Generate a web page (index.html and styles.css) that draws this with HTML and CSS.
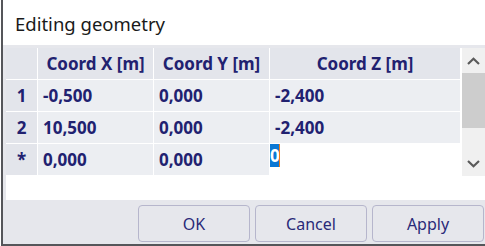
FILE: index.html
```html
<html>
	<head>
		<title>Editing geometry</title>
		<link rel="stylesheet" href="styles.css">
	</head>
	<body>
		<div class="dialog">
			<div class="title">Editing geometry</div>
			<div class="table-box">
				<div class="grid">
					<div class="head"></div>
					<div class="head">Coord X [m]</div>
					<div class="head">Coord Y [m]</div>
					<div class="head">Coord Z [m]</div>

					<div class="rowhead">1</div>
					<div class="cell">-0,500</div>
					<div class="cell">0,000</div>
					<div class="cell">-2,400</div>

					<div class="rowhead">2</div>
					<div class="cell">10,500</div>
					<div class="cell">0,000</div>
					<div class="cell">-2,400</div>

					<div class="rowhead">*</div>
					<div class="cell">0,000</div>
					<div class="cell">0,000</div>
					<div class="cell editing"><span class="sel">0</span><span class="caret"></span></div>
				</div>
				<div class="scrollbar">
					<div class="arrow">
						<svg width="13" height="8" viewBox="0 0 13 8"><path d="M1 7 L6.5 1.8 L12 7" fill="none" stroke="#5a5a5a" stroke-width="2.2"/></svg>
					</div>
					<div class="thumb"></div>
					<div class="track"></div>
					<div class="arrow">
						<svg width="13" height="8" viewBox="0 0 13 8"><path d="M1 1 L6.5 6.2 L12 1" fill="none" stroke="#5a5a5a" stroke-width="2.2"/></svg>
					</div>
				</div>
			</div>
			<div class="buttons">
				<button type="button">OK</button>
				<button type="button">Cancel</button>
				<button type="button">Apply</button>
			</div>
		</div>
	</body>
</html>
```

FILE: styles.css
```css
body {
  margin: 0;
  width: 485px;
  height: 246px;
  overflow: hidden;
  background: #ffffff;
  font-family: "Noto Sans", "Open Sans", sans-serif;
}

/* Dialog frame */
.dialog {
  margin-left: 1px;
  height: 244px;
  border-left: 2px solid #55565a;
  border-bottom: 2px solid #55565a;
  background: #e6e7ec;
}

.title {
  height: 45px;
  background: #ffffff;
  padding-left: 12px;
  font-size: 18.5px;
  line-height: 47px;
  color: #1a1a1a;
}

/* Table with scrollbar */
.table-box {
  display: flex;
  gap: 2px;
  margin: 3px 0 0 3px;
  height: 152px;
  background: #ffffff;
}

.grid {
  display: grid;
  grid-template-columns: 31px 115px 115px 190px;
  grid-template-rows: repeat(4, 31px);
  gap: 1px;
  align-self: flex-start;
  background: #ffffff;
  color: #212170;
  font-weight: bold;
  font-size: 17px;
}

.head {
  background: #e3e5eb;
  display: flex;
  align-items: center;
  justify-content: center;
}

.rowhead {
  background: #e3e5eb;
  display: flex;
  align-items: center;
  justify-content: center;
}

.cell {
  background: #eceef2;
  display: flex;
  align-items: center;
  padding-left: 5px;
}

.cell.editing {
  background: #ffffff;
  padding-left: 0;
  align-items: flex-start;
}

.sel {
  background: #0b78d4;
  color: #ffffff;
  width: 9px;
  height: 23px;
  line-height: 23px;
  text-align: center;
}

.caret {
  width: 1px;
  height: 23px;
  background: #f07a1a;
}

.scrollbar {
  width: 23px;
  height: 128px;
  background: #f0f0f0;
  display: flex;
  flex-direction: column;
}

.arrow {
  height: 25px;
  display: flex;
  align-items: center;
  justify-content: center;
}

.thumb {
  height: 55px;
  background: #cdcdcd;
}

.track {
  flex: 1;
}

/* Buttons */
.buttons {
  display: flex;
  justify-content: flex-end;
  gap: 5px;
  margin-top: 5px;
  padding-right: 1px;
}

button {
  width: 112px;
  height: 37px;
  background: #e6e7ec;
  border: 1px solid #b6b6cc;
  border-radius: 4px;
  color: #2a2a78;
  font-family: "Noto Sans", "Open Sans", sans-serif;
  font-size: 16px;
  padding: 0;
}
```
